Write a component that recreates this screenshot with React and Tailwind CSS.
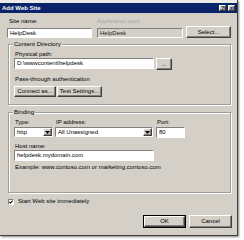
import React from 'react';

const face = "bg-[#d4d0c8]";
const sunken = "border border-t-[#808080] border-l-[#808080] border-r-white border-b-white";
const raised = "border border-t-white border-l-white border-r-[#404040] border-b-[#404040] shadow-[inset_-1px_-1px_0_#808080]";

function Field({ value, className = "", disabled = false }) {
  return (
    <div className={`${sunken} ${disabled ? face + " text-[#202020]" : "bg-white"} flex items-center pl-[2px] leading-[7px] ${className}`}>
      {value}
    </div>
  );
}

function Btn({ children, className = "", isDefault = false }) {
  if (isDefault) {
    return (
      <div className={`border border-black ${className} flex`}>
        <div className={`${raised} ${face} flex-1 flex items-center justify-center leading-[7px]`}>{children}</div>
      </div>
    );
  }
  return (
    <div className={`${raised} ${face} flex items-center justify-center leading-[7px] ${className}`}>{children}</div>
  );
}

function Combo({ value, className = "" }) {
  return (
    <div className={`${sunken} bg-white flex items-center ${className}`}>
      <span className="flex-1 pl-[2px] leading-[7px]">{value}</span>
      <div className={`${raised} ${face} w-[9px] h-full flex items-center justify-center`}>
        <svg width="5" height="3" viewBox="0 0 5 3"><path d="M0 0h5L2.5 3z" fill="#000" /></svg>
      </div>
    </div>
  );
}

function Group({ title, className = "", children }) {
  return (
    <div className={`border border-[#a09e99] shadow-[inset_1px_1px_0_#fff,1px_1px_0_#fff] box-border ${className}`}>
      <div className={`-mt-[4px] ml-[4px] w-fit px-[1px] leading-[7px] ${face}`}>{title}</div>
      {children}
    </div>
  );
}

export default function App() {
  return (
    <div className="w-[244px] h-[240px] bg-white font-['Liberation_Sans',Arial,sans-serif] text-[6px] text-black overflow-hidden">
      <div className={`w-[238px] h-[236px] ${face} border-r border-b border-[#404040] shadow-[1px_1px_2px_rgba(0,0,0,0.5)] flex flex-col`}>
        <div className="h-[3px] bg-[#ecebe8]" />
        <div className="h-[10px] bg-[#0a246a] flex items-center pl-[2px] pr-[2px]">
          <span className="flex-1 text-white font-bold leading-[7px]">Add Web Site</span>
          <div className={`${raised} ${face} w-[7px] h-[6px] flex items-center justify-center text-[5px] font-bold leading-[5px]`}>?</div>
          <div className={`${raised} ${face} w-[7px] h-[6px] ml-[2px] flex items-center justify-center text-[5px] font-bold leading-[5px]`}>×</div>
        </div>

        <div className="flex items-end mt-[5px] ml-[7px]">
          <div className="w-[85px]">
            <div className="leading-[7px] mb-[3px] ml-[2px]">Site name:</div>
            <Field value="HelpDesk" className="h-[10px]" />
          </div>
          <div className="w-[86px] ml-[5px]">
            <div className="leading-[7px] mb-[3px] text-[#a8a6a0]">Application pool:</div>
            <Field value="HelpDesk" disabled className="h-[10px]" />
          </div>
          <Btn className="w-[45px] h-[12px] ml-[3px]">Select...</Btn>
        </div>

        <Group title="Content Directory" className="mt-[6px] ml-[8px] w-[223px] h-[61px]">
          <div className="pl-[5px] flex flex-col">
            <div className="mt-[3px] ml-[1px] leading-[7px]">Physical path:</div>
            <div className="flex items-start">
              <Field value={"D:\\wwwcontent\\helpdesk"} className="w-[140px] h-[11px]" />
              <Btn className="w-[16px] h-[12px] ml-[2px]">...</Btn>
            </div>
            <div className="mt-[6px] ml-[1px] leading-[7px]">Pass-through authentication</div>
            <div className="flex mt-[3px]">
              <Btn className="w-[42px] h-[11px]">Connect as...</Btn>
              <Btn className="w-[45px] h-[11px] ml-[1px]">Test Settings...</Btn>
            </div>
          </div>
        </Group>

        <Group title="Binding" className="mt-[7px] ml-[8px] w-[223px] h-[81px]">
          <div className="pl-[5px] flex flex-col">
            <div className="flex mt-[3px]">
              <div className="w-[39px]">
                <div className="ml-[1px] leading-[7px] mb-[1px]">Type:</div>
                <Combo value="http" className="h-[10px]" />
              </div>
              <div className="w-[98px] ml-[2px]">
                <div className="ml-[1px] leading-[7px] mb-[1px]">IP address:</div>
                <Combo value="All Unassigned" className="h-[10px]" />
              </div>
              <div className="w-[29px] ml-[3px]">
                <div className="ml-[1px] leading-[7px] mb-[1px]">Port:</div>
                <Field value="80" className="h-[11px]" />
              </div>
            </div>
            <div className="mt-[5px] ml-[1px] leading-[7px]">Host name:</div>
            <Field value="helpdesk.mydomain.com" className="w-[140px] h-[11px]" />
            <div className="mt-[3px] ml-[1px] leading-[7px]">Example: www.contoso.com or marketing.contoso.com</div>
          </div>
        </Group>

        <div className="flex items-center mt-[5px] ml-[8px]">
          <div className={`${sunken} bg-white w-[6px] h-[6px] flex items-center justify-center`}>
            <svg width="4" height="4" viewBox="0 0 4 4"><path d="M0.3 1.8L1.5 3L3.7 0.6" stroke="#000" strokeWidth="1.1" fill="none" /></svg>
          </div>
          <span className="ml-[4px] leading-[7px]">Start Web site immediately</span>
        </div>

        <div className="flex mt-[10px] ml-[143px]">
          <Btn isDefault className="w-[43px] h-[13px]">OK</Btn>
          <Btn className="w-[43px] h-[13px] ml-[3px]">Cancel</Btn>
        </div>
      </div>
    </div>
  );
}
